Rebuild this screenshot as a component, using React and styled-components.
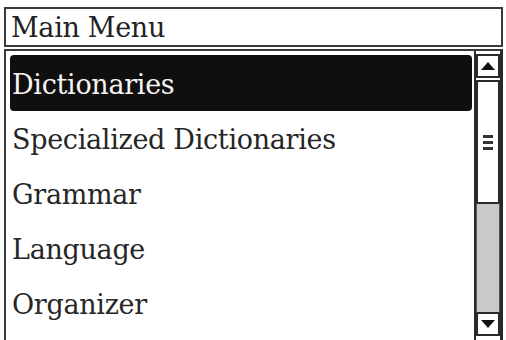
import React from "react";
import styled, { createGlobalStyle } from "styled-components";

const GlobalStyle = createGlobalStyle`
  html, body {
    margin: 0;
    padding: 0;
    background: #fff;
    overflow: hidden;
  }
`;

const Screen = styled.div`
  width: 506px;
  height: 340px;
  overflow: hidden;
  background: #fff;
  font-family: "DejaVu Serif", "Liberation Serif", serif;
  color: #1a1a1a;
`;

// only the bottoms of the caption letters show above the frame
const Caption = styled.div`
  height: 7px;
  overflow: hidden;
  display: flex;
  align-items: flex-end;
  padding-left: 170px;

  span {
    display: block;
    font-family: "Liberation Sans", sans-serif;
    font-weight: bold;
    font-size: 24px;
    line-height: 1;
    margin-bottom: 9px;
    color: #111;
  }
`;

const Frame = styled.div`
  margin: 0 3px 0 4px;
  display: flex;
  flex-direction: column;
`;

const TitleBar = styled.div`
  height: 36px;
  border: 2px solid #3a3a3a;
  padding-left: 5px;
  font-size: 27px;
  line-height: 38px;
  letter-spacing: -0.3px;
  color: #222;
`;

const Body = styled.div`
  margin-top: 2px;
  border-top: 2px solid #3a3a3a;
  border-left: 2px solid #3a3a3a;
  display: flex;
  height: 300px;
`;

const List = styled.ul`
  list-style: none;
  margin: 0;
  padding: 4px 2px 0 4px;
  flex: 1;
`;

const Item = styled.li`
  height: 56px;
  margin-bottom: -1px;
  padding-left: 2px;
  border-radius: 4px;
  font-size: 27px;
  line-height: 60px;
  letter-spacing: -0.3px;
  white-space: nowrap;
  background: ${(p) => (p.$active ? "#110f0e" : "transparent")};
  color: ${(p) => (p.$active ? "#f4f4f4" : "#262626")};
`;

const ScrollBar = styled.div`
  width: 24px;
  border-left: 2px solid #2a2a2a;
  border-right: 3px solid #2a2a2a;
  display: flex;
  flex-direction: column;
  padding-top: 3px;
`;

const ArrowButton = styled.div`
  height: 20px;
  border: 2px solid #2a2a2a;
  background: #fff;
  display: flex;
  align-items: center;
  justify-content: center;
  margin: ${(p) => (p.$down ? "0" : "0 0 2px")};
`;

const Thumb = styled.div`
  height: 120px;
  border: 2px solid #2a2a2a;
  background: #fff;
  display: flex;
  align-items: center;
  justify-content: center;
`;

const Grip = styled.div`
  width: 10px;
  display: flex;
  flex-direction: column;
  gap: 3px;

  i {
    display: block;
    height: 3px;
    background: #333;
  }
`;

const Track = styled.div`
  height: 108px;
  background: #c9c9c7;
  border-left: 1px solid #555;
  border-right: 1px solid #555;
`;

const Triangle = ({ down }) => (
  <svg width="14" height="8" viewBox="0 0 14 8">
    <polygon
      points={down ? "0,0 14,0 7,8" : "7,0 14,8 0,8"}
      fill="#111"
    />
  </svg>
);

const items = [
  "Dictionaries",
  "Specialized Dictionaries",
  "Grammar",
  "Language",
  "Organizer",
];

export default function App() {
  return (
    <Screen>
      <GlobalStyle />
      <Caption>
        <span>Display</span>
      </Caption>
      <Frame>
        <TitleBar>Main Menu</TitleBar>
        <Body>
          <List>
            {items.map((label, i) => (
              <Item key={label} $active={i === 0}>
                {label}
              </Item>
            ))}
          </List>
          <ScrollBar>
            <ArrowButton>
              <Triangle />
            </ArrowButton>
            <Thumb>
              <Grip>
                <i />
                <i />
                <i />
              </Grip>
            </Thumb>
            <Track />
            <ArrowButton $down>
              <Triangle down />
            </ArrowButton>
          </ScrollBar>
        </Body>
      </Frame>
    </Screen>
  );
}
